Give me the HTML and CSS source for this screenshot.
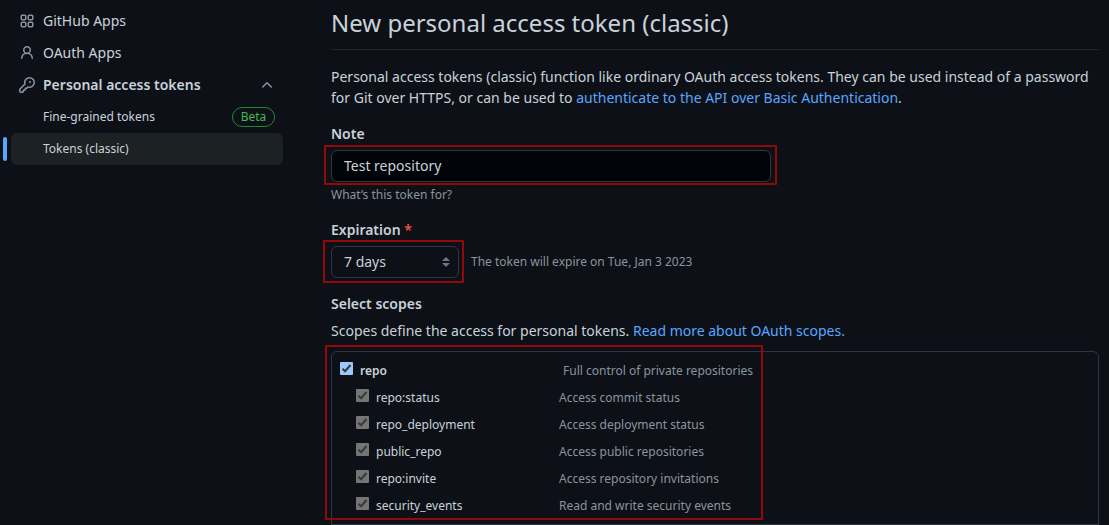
FILE: index.html
```html
<!DOCTYPE html>
<html lang="en">
<head>
<meta charset="utf-8">
<meta name="viewport" content="width=device-width, initial-scale=1">
<title>New personal access token (classic)</title>
<link rel="stylesheet" href="styles.css">
</head>
<body>
<div class="layout">
  <nav class="sidebar" aria-label="Developer settings">
    <a class="nav-item" href="#apps">
      <svg class="icon" viewBox="0 0 16 16" fill="none" stroke="currentColor" stroke-width="1.5" aria-hidden="true"><rect x="2.25" y="2.25" width="4.5" height="4.5" rx="1"/><rect x="9.25" y="2.25" width="4.5" height="4.5" rx="1"/><rect x="2.25" y="9.25" width="4.5" height="4.5" rx="1"/><rect x="9.25" y="9.25" width="4.5" height="4.5" rx="1"/></svg>
      <span>GitHub Apps</span>
    </a>
    <a class="nav-item" href="#oauth">
      <svg class="icon" viewBox="0 0 16 16" fill="currentColor" aria-hidden="true"><path d="M10.561 8.073a6.005 6.005 0 0 1 3.432 5.142.75.75 0 1 1-1.498.07 4.5 4.5 0 0 0-8.99 0 .75.75 0 0 1-1.498-.07 6.004 6.004 0 0 1 3.431-5.142 3.999 3.999 0 1 1 5.123 0ZM10.5 5a2.5 2.5 0 1 0-5 0 2.5 2.5 0 0 0 5 0Z"/></svg>
      <span>OAuth Apps</span>
    </a>
    <button class="nav-item nav-group" type="button" aria-expanded="true">
      <svg class="icon" viewBox="0 0 16 16" fill="currentColor" aria-hidden="true"><path d="M10.5 0a5.499 5.499 0 1 1-1.288 10.848l-.932.932a.749.749 0 0 1-.53.22H7v.75a.749.749 0 0 1-.22.53l-.5.5a.749.749 0 0 1-.53.22H5v.75a.749.749 0 0 1-.22.53l-.5.5a.749.749 0 0 1-.53.22h-2A1.75 1.75 0 0 1 0 14.25v-2c0-.199.079-.389.22-.53l4.932-4.932A5.5 5.5 0 0 1 10.5 0Zm-4 5.5c-.001.431.069.86.205 1.269a.75.75 0 0 1-.181.768L1.5 12.56v1.69c0 .138.112.25.25.25h1.69l.06-.06v-1.19a.75.75 0 0 1 .75-.75h1.19l.06-.06v-1.19a.75.75 0 0 1 .75-.75h1.19l1.023-1.025a.75.75 0 0 1 .768-.18A4 4 0 1 0 6.5 5.5ZM11 6a1 1 0 1 1 0-2 1 1 0 0 1 0 2Z"/></svg>
      <span class="nav-label">Personal access tokens</span>
      <svg class="icon" viewBox="0 0 16 16" fill="currentColor" aria-hidden="true"><path d="M3.22 10.53a.749.749 0 0 1 0-1.06l4.25-4.25a.749.749 0 0 1 1.06 0l4.25 4.25a.749.749 0 1 1-1.06 1.06L8 6.811 4.28 10.53a.749.749 0 0 1-1.06 0Z"/></svg>
    </button>
    <a class="nav-item nav-sub" href="#fine-grained"><span class="nav-label">Fine-grained tokens</span><span class="badge">Beta</span></a>
    <a class="nav-item nav-sub nav-current" href="#classic" aria-current="page">Tokens (classic)</a>
  </nav>

  <main class="content">
    <h1 class="title">New personal access token (classic)</h1>
    <p class="intro">Personal access tokens (classic) function like ordinary OAuth access tokens. They can be used instead of a password for Git over HTTPS, or can be used to <a class="link" href="#basic-auth">authenticate to the API over Basic Authentication</a>.</p>

    <form>
      <label class="field-label" for="note">Note</label>
      <div class="note-field marked">
        <input class="control text-input" id="note" type="text" value="Test repository">
      </div>
      <p class="hint note-hint">What’s this token for?</p>

      <label class="field-label" for="expiration">Expiration <span class="required">*</span></label>
      <div class="expiration-row">
        <div class="expiration-field marked">
          <select class="control select" id="expiration"><option>7 days</option></select>
          <svg class="select-arrows" viewBox="0 0 8 10" fill="currentColor" aria-hidden="true"><path d="M4 0 8 4H0ZM4 10 0 6h8Z"/></svg>
        </div>
        <span class="hint">The token will expire on Tue, Jan 3 2023</span>
      </div>

      <h2 class="field-label">Select scopes</h2>
      <p class="scopes-intro">Scopes define the access for personal tokens. <a class="link" href="#scopes">Read more about OAuth scopes.</a></p>

      <div class="scopes">
        <div class="scope-group">
          <div class="scope scope-parent"><input class="check" type="checkbox" id="repo" checked><label class="scope-name" for="repo">repo</label><span class="hint">Full control of private repositories</span></div>
          <div class="scope"><input class="check" type="checkbox" id="status" checked disabled><label class="scope-name" for="status">repo:status</label><span class="hint">Access commit status</span></div>
          <div class="scope"><input class="check" type="checkbox" id="deployment" checked disabled><label class="scope-name" for="deployment">repo_deployment</label><span class="hint">Access deployment status</span></div>
          <div class="scope"><input class="check" type="checkbox" id="public" checked disabled><label class="scope-name" for="public">public_repo</label><span class="hint">Access public repositories</span></div>
          <div class="scope"><input class="check" type="checkbox" id="invite" checked disabled><label class="scope-name" for="invite">repo:invite</label><span class="hint">Access repository invitations</span></div>
          <div class="scope"><input class="check" type="checkbox" id="security" checked disabled><label class="scope-name" for="security">security_events</label><span class="hint">Read and write security events</span></div>
        </div>
      </div>
    </form>
  </main>
</div>
</body>
</html>
```
FILE: styles.css
```css
*,
*::before,
*::after {
  box-sizing: border-box;
}

body {
  margin: 0;
  background: #0d1117;
  color: #c9d1d9;
  font: 14px/21px "Noto Sans", sans-serif;
}

h1, h2, p {
  margin: 0;
}

.layout {
  display: flex;
  gap: 48px;
  padding: 5px 10px 0 11px;
}

.sidebar {
  flex: none;
  width: 272px;
}

.nav-item {
  position: relative;
  display: flex;
  align-items: center;
  gap: 8px;
  width: 100%;
  height: 32px;
  padding: 0 8px;
  border: 0;
  border-radius: 6px;
  background: none;
  color: inherit;
  font: inherit;
  line-height: 20px;
  text-align: left;
  text-decoration: none;
}

.nav-group {
  font-weight: 600;
}

.nav-sub {
  padding-left: 32px;
  font-size: 12px;
}

.nav-label {
  flex: 1;
}

.nav-current {
  background: #1c2124;
}

.nav-current::before {
  content: "";
  position: absolute;
  top: 4px;
  left: -8px;
  width: 4px;
  height: 24px;
  border-radius: 6px;
  background: #58a6ff;
}

.icon {
  display: block;
  flex: none;
  width: 16px;
  height: 16px;
  color: #8b949e;
}

.badge {
  min-width: 43px;
  border: 1px solid #238636;
  border-radius: 20px;
  color: #3fb950;
  font-size: 12px;
  line-height: 18px;
  text-align: center;
}

.content {
  flex: 1;
  min-width: 0;
}

.title {
  padding-bottom: 8px;
  border-bottom: 1px solid #21262d;
  font-size: 24px;
  font-weight: 400;
  line-height: 36px;
}

.intro {
  margin: 16px 0 15px;
}

.link {
  color: #58a6ff;
  text-decoration: none;
}

.field-label {
  display: block;
  margin-bottom: 6px;
  font-size: 14px;
  font-weight: 600;
  line-height: 21px;
}

.required {
  color: #f85149;
}

.control {
  display: block;
  width: 100%;
  height: 32px;
  margin: 0;
  padding: 0 12px 1px;
  border: 1px solid #30363d;
  border-radius: 6px;
  color: inherit;
  font: inherit;
  line-height: 20px;
  appearance: none;
}

.text-input {
  background: #010409;
}

.select {
  background: #0d1117;
}

.marked {
  position: relative;
}

.marked::after,
.scope-group::after {
  content: "";
  position: absolute;
  inset: -5px -6px -3px -7px;
  border: 2px solid #900a0c;
  border-radius: 1px;
  pointer-events: none;
}

.expiration-field::after {
  inset: -6px -5px -5px -8px;
}

.note-field {
  max-width: 440px;
}

.note-hint {
  margin: 4px 0 15px;
}

.hint {
  color: #8b949e;
  font-size: 12px;
  line-height: 18px;
}

.expiration-row {
  display: flex;
  align-items: center;
  gap: 12px;
  margin-bottom: 15px;
}

.expiration-field {
  width: 128px;
}

.select-arrows {
  position: absolute;
  top: 11px;
  right: 9px;
  width: 8px;
  height: 10px;
  color: #6e7681;
  pointer-events: none;
}

.scopes {
  margin-top: 10px;
  border: 1px solid #30363d;
  border-radius: 6px 6px 0 0;
}

.scope-group {
  position: relative;
  padding: 5px 8px;
  border-bottom: 1px solid #30363d;
}

.scope-group::after {
  inset: -7px auto 4px -7px;
  width: 438px;
}

.scope {
  display: grid;
  grid-template-columns: 13px 176px 1fr;
  column-gap: 7px;
  align-items: center;
  height: 27px;
  padding-left: 16px;
  font-size: 12px;
}

.scope-parent {
  grid-template-columns: 13px 196px 1fr;
  padding-left: 0;
  font-weight: 600;
}

.scope-parent .hint {
  font-weight: 400;
}

.check {
  width: 13px;
  height: 13px;
  margin: 0 0 4px;
  border-radius: 1px;
  background: #99c8ff url("data:image/svg+xml,%3Csvg xmlns='http://www.w3.org/2000/svg' viewBox='0 0 13 13'%3E%3Cpath d='M2.5 6.7 5.1 9.3 10.5 3' fill='none' stroke='%233b3b3b' stroke-width='2.1'/%3E%3C/svg%3E");
  appearance: none;
}

.check:disabled {
  background-color: #757575;
}
```
